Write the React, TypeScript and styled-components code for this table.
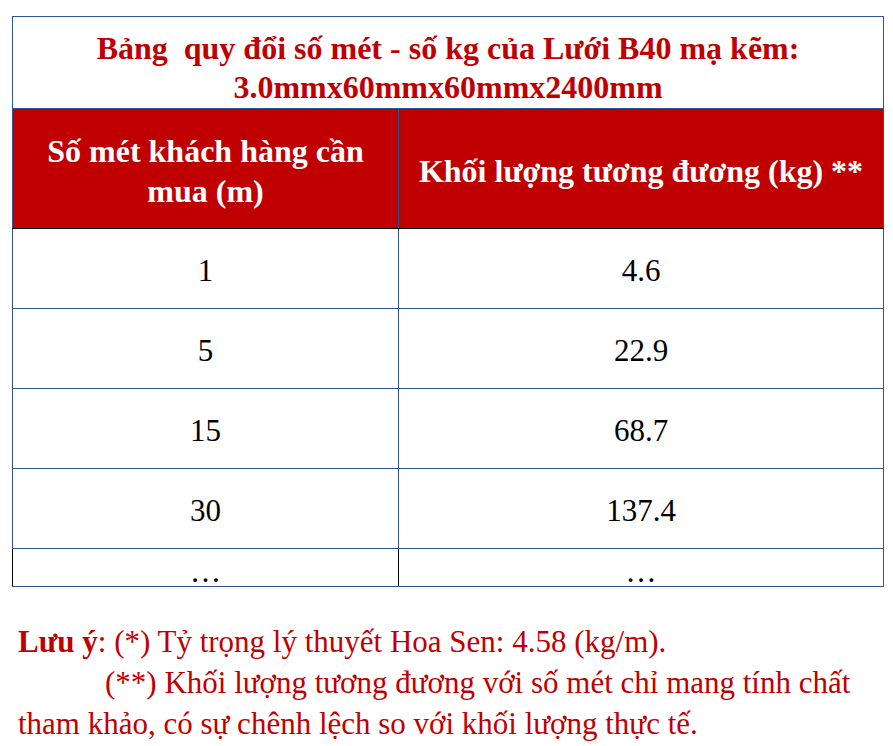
import styled, { createGlobalStyle } from "styled-components";

const GlobalStyle = createGlobalStyle`
  html, body {
    margin: 0;
    padding: 0;
    background: #ffffff;
  }
  body {
    font-family: "Liberation Serif", "Times New Roman", serif;
  }
`;

const BLUE = "#2f5597";
const RED = "#c00000";

interface rowType {
  meters: string;
  kg: string;
  topBlack: boolean;
}

const rows: rowType[] = [
  { meters: "1", kg: "4.6", topBlack: true },
  { meters: "5", kg: "22.9", topBlack: false },
  { meters: "15", kg: "68.7", topBlack: true },
  { meters: "30", kg: "137.4", topBlack: true },
];

const App = () => {
  return (
    <Page>
      <GlobalStyle />
      <Table>
        <colgroup>
          <col style={{ width: "386px" }} />
          <col style={{ width: "485px" }} />
        </colgroup>
        <tbody>
          <tr>
            <TitleCell colSpan={2}>
              Bảng&nbsp; quy đổi số mét - số kg của Lưới B40 mạ kẽm:
              <br />
              3.0mmx60mmx60mmx2400mm
            </TitleCell>
          </tr>
          <tr>
            <HeadCell>
              Số mét khách hàng cần
              <br />
              mua (m)
            </HeadCell>
            <HeadCell>Khối lượng tương đương (kg) **</HeadCell>
          </tr>
          {rows.map((row) => (
            <tr key={row.meters}>
              <DataCell $topBlack={row.topBlack}>{row.meters}</DataCell>
              <DataCell $topBlack={false}>{row.kg}</DataCell>
            </tr>
          ))}
          <tr>
            <LastCell $black>…</LastCell>
            <LastCell>…</LastCell>
          </tr>
        </tbody>
      </Table>
      <Note>
        <NoteLine>
          <Strong>Lưu ý</Strong>: (*) Tỷ trọng lý thuyết Hoa Sen: 4.58 (kg/m).
        </NoteLine>
        <NoteIndent>
          (**) Khối lượng tương đương với số mét chỉ mang tính chất tham khảo,
          có sự chênh lệch so với khối lượng thực tế.
        </NoteIndent>
      </Note>
    </Page>
  );
};

export default App;

const Page = styled.div`
  padding: 16px 0 0 12px;
  width: 893px;
  box-sizing: border-box;
`;

const Table = styled.table`
  border-collapse: collapse;
  table-layout: fixed;
  width: 871px;
`;

const TitleCell = styled.td`
  height: 92px;
  box-sizing: border-box;
  border: 1px solid ${BLUE};
  color: ${RED};
  font-weight: bold;
  font-size: 32px;
  line-height: 39px;
  text-align: center;
  padding: 11px 0 0;
  vertical-align: middle;
`;

const HeadCell = styled.td`
  height: 120px;
  box-sizing: border-box;
  background: ${RED};
  color: #ffffff;
  font-weight: bold;
  font-size: 32px;
  line-height: 40px;
  text-align: center;
  padding: 4px 0 0;
  border: 1px solid ${BLUE};
  border-bottom: 1px solid #000000;
`;

const DataCell = styled.td<{ $topBlack: boolean }>`
  height: 80px;
  box-sizing: border-box;
  border: 1px solid ${BLUE};
  border-top: 1px solid ${(p) => (p.$topBlack ? "#000000" : BLUE)};
  color: #000000;
  font-size: 31px;
  text-align: center;
  padding: 4px 0 0;
`;

const LastCell = styled.td<{ $black?: boolean }>`
  height: 38px;
  box-sizing: border-box;
  border: 1px solid ${BLUE};
  border-top: 1px solid ${(p) => (p.$black ? "#000000" : BLUE)};
  border-left: 1px solid ${(p) => (p.$black ? "#000000" : BLUE)};
  border-right: 1px solid ${(p) => (p.$black ? "#000000" : BLUE)};
  color: #000000;
  font-size: 31px;
  line-height: 28px;
  text-align: center;
  vertical-align: bottom;
  padding: 0;
`;

const Note = styled.div`
  margin-top: 34px;
  padding-left: 6px;
  width: 850px;
  color: ${RED};
  font-size: 31px;
  line-height: 41px;
`;

const NoteLine = styled.div``;

const NoteIndent = styled.div`
  text-indent: 87px;
`;

const Strong = styled.b`
  font-weight: bold;
`;
